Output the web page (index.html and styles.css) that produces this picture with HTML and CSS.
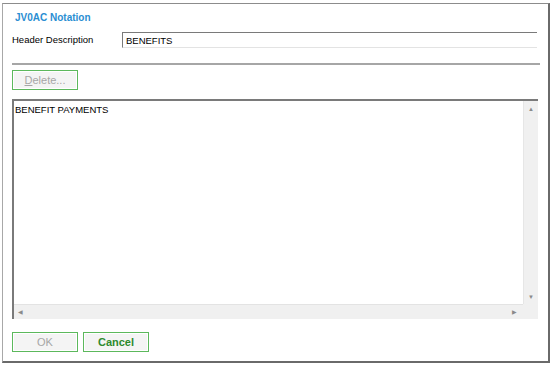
FILE: index.html
```html
<!DOCTYPE html>
<html lang="en">
  <head>
    <meta charset="UTF-8" />
    <title>JV0AC Notation</title>
    <link rel="stylesheet" href="styles.css">
  </head>
  <body>
    <div class="dialog">
      <div class="title">JV0AC Notation</div>
      <div class="field-row">
        <span class="label">Header Description</span>
        <div class="input">BENEFITS</div>
      </div>
      <div class="separator"></div>
      <button class="btn disabled"><u>D</u>elete...</button>
      <div class="memo">
        <div class="memo-body">
          <div class="memo-text">BENEFIT PAYMENTS</div>
          <div class="vscroll">
            <span class="arrow">&#9650;</span>
            <span class="arrow">&#9660;</span>
          </div>
        </div>
        <div class="hscroll-row">
          <div class="hscroll">
            <span class="arrow">&#9664;</span>
            <span class="arrow">&#9654;</span>
          </div>
          <div class="corner"></div>
        </div>
      </div>
      <div class="actions">
        <button class="btn disabled">OK</button>
        <button class="btn primary">Cancel</button>
      </div>
    </div>
  </body>
</html>
```

FILE: styles.css
```css
* {
  margin: 0;
  padding: 0;
  box-sizing: border-box;
}

body {
  background: #fff;
  font-family: "Liberation Sans", Arial, sans-serif;
  font-size: 9.5px;
  color: #000;
}

.dialog {
  margin: 3px 0 0 2px;
  width: 548px;
  height: 360px;
  border-left: 1px solid #a8a8a8;
  border-top: 1px solid #8c8c8c;
  border-right: 2px solid #6a6a6a;
  border-bottom: 2px solid #6a6a6a;
  padding: 7px 9px 0 9px;
  display: flex;
  flex-direction: column;
}

.title {
  color: #2a8ed2;
  font-weight: bold;
  font-size: 10px;
  line-height: 14px;
  padding-left: 3px;
}

.field-row {
  display: flex;
  align-items: center;
  margin-top: 6px;
  height: 17px;
}

.label {
  width: 110px;
}

.input {
  width: 415px;
  height: 16px;
  border-top: 1px solid #7a7a7a;
  border-left: 1px solid #7a7a7a;
  border-bottom: 1px solid #e3e3e3;
  padding: 2px 0 0 3px;
  font-size: 9.5px;
  line-height: 12px;
}

.separator {
  margin-top: 15px;
  width: 528px;
  height: 2px;
  background: #a6a6a6;
}

.btn {
  width: 66px;
  height: 20px;
  border: 1px solid #5cb85c;
  background: #f4f4f4;
  font-family: "Liberation Sans", Arial, sans-serif;
  font-size: 11px;
  color: #a6a6a6;
  box-shadow: inset 0 0 0 1px #ffffff;
}

.dialog > .btn {
  margin-top: 5px;
}

.btn.primary {
  color: #2e8a2e;
  font-weight: bold;
}

.memo {
  margin-top: 9px;
  width: 526px;
  height: 220px;
  border-top: 2px solid #7a7a7a;
  border-left: 2px solid #7a7a7a;
  display: flex;
  flex-direction: column;
}

.memo-body {
  flex: 1;
  display: flex;
}

.memo-text {
  flex: 1;
  padding: 3px 0 0 1px;
  font-size: 9.5px;
}

.vscroll {
  width: 15px;
  background: #f0f0f0;
  border-left: 1px solid #e6e6e6;
  display: flex;
  flex-direction: column;
  justify-content: space-between;
  align-items: center;
  padding: 4px 0 3px;
}

.arrow {
  font-size: 6px;
  color: #8a8a8a;
  line-height: 8px;
}

.hscroll-row {
  height: 15px;
  display: flex;
}

.hscroll {
  flex: 1;
  background: #f0f0f0;
  border-top: 1px solid #e3e3e3;
  display: flex;
  justify-content: space-between;
  align-items: center;
  padding: 0 6px 0 4px;
}

.corner {
  width: 15px;
  background: #f0f0f0;
}

.actions {
  display: flex;
  gap: 5px;
  margin-top: 13px;
}
```
